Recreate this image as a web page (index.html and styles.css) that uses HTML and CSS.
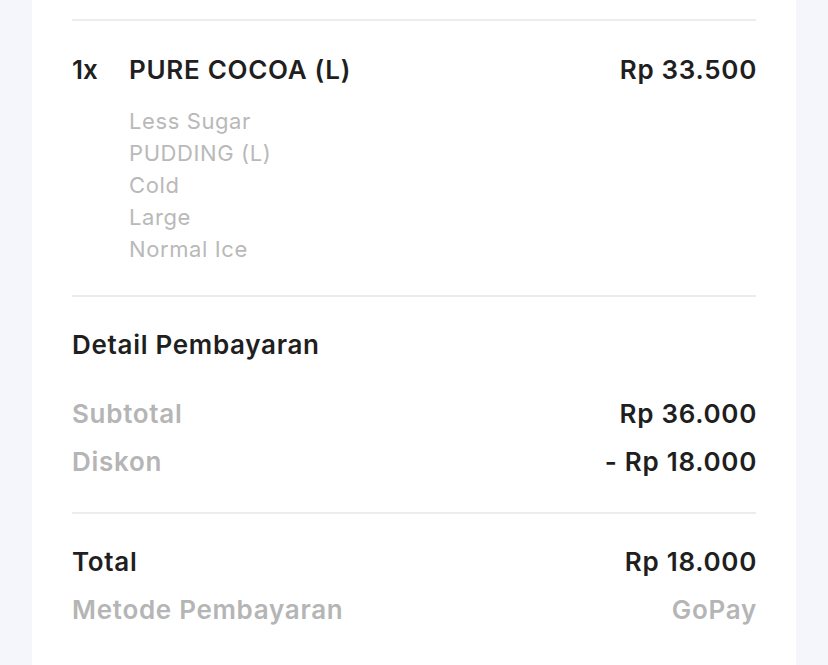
FILE: index.html
```html
<!DOCTYPE html>
<html lang="id">
<head>
<meta charset="utf-8">
<link rel="stylesheet" href="styles.css">
</head>
<body>
<div class="card">
  <hr class="divider">
  <div class="item">
    <div class="item-row">
      <span class="qty">1x</span>
      <span class="name">PURE COCOA (L)</span>
      <span class="price">Rp 33.500</span>
    </div>
    <ul class="mods">
      <li>Less Sugar</li>
      <li>PUDDING (L)</li>
      <li>Cold</li>
      <li>Large</li>
      <li>Normal Ice</li>
    </ul>
  </div>
  <hr class="divider">
  <h2 class="heading">Detail Pembayaran</h2>
  <div class="rows">
    <div class="row"><span class="label">Subtotal</span><span class="value">Rp 36.000</span></div>
    <div class="row"><span class="label">Diskon</span><span class="value">- Rp 18.000</span></div>
  </div>
  <hr class="divider">
  <div class="rows totals">
    <div class="row"><span class="label strong">Total</span><span class="value">Rp 18.000</span></div>
    <div class="row"><span class="label">Metode Pembayaran</span><span class="value muted">GoPay</span></div>
  </div>
</div>
</body>
</html>
```

FILE: styles.css
```css
html, body {
  margin: 0;
  padding: 0;
  background: #f5f6fb;
  font-family: Inter, "Noto Sans", sans-serif;
  color: #1f1f1f;
}
.card {
  margin: 0 32px;
  padding: 19px 40px 40px;
  background: #ffffff;
  min-height: 700px;
  box-sizing: border-box;
}
.divider {
  border: 0;
  height: 2px;
  background: #ececec;
  margin: 0;
}
.item {
  padding: 31px 0 30px;
}
.item-row {
  display: flex;
  align-items: center;
  font-size: 26px;
  font-weight: 600;
  line-height: 36px;
  letter-spacing: 0.7px;
}
.qty {
  width: 57px;
  letter-spacing: 0;
}
.name {
  flex: 1;
}
.price {
  margin-right: -1px;
}
.mods {
  list-style: none;
  margin: 17px 0 0 57px;
  padding: 0;
  font-size: 22px;
  line-height: 32px;
  color: #b9b9b9;
  letter-spacing: 0.6px;
}
.heading {
  margin: 30px 0 27px;
  font-size: 26px;
  font-weight: 600;
  line-height: 36px;
  letter-spacing: 0.7px;
}
.rows {
  padding-bottom: 26px;
}
.totals {
  padding-top: 24px;
}
.row {
  display: flex;
  justify-content: space-between;
  font-size: 26px;
  font-weight: 600;
  line-height: 48px;
  letter-spacing: 0.7px;
}
.value {
  margin-right: -1px;
}
.label {
  color: #b5b5b5;
}
.label.strong {
  color: #1f1f1f;
}
.value.muted {
  color: #b5b5b5;
}
```
